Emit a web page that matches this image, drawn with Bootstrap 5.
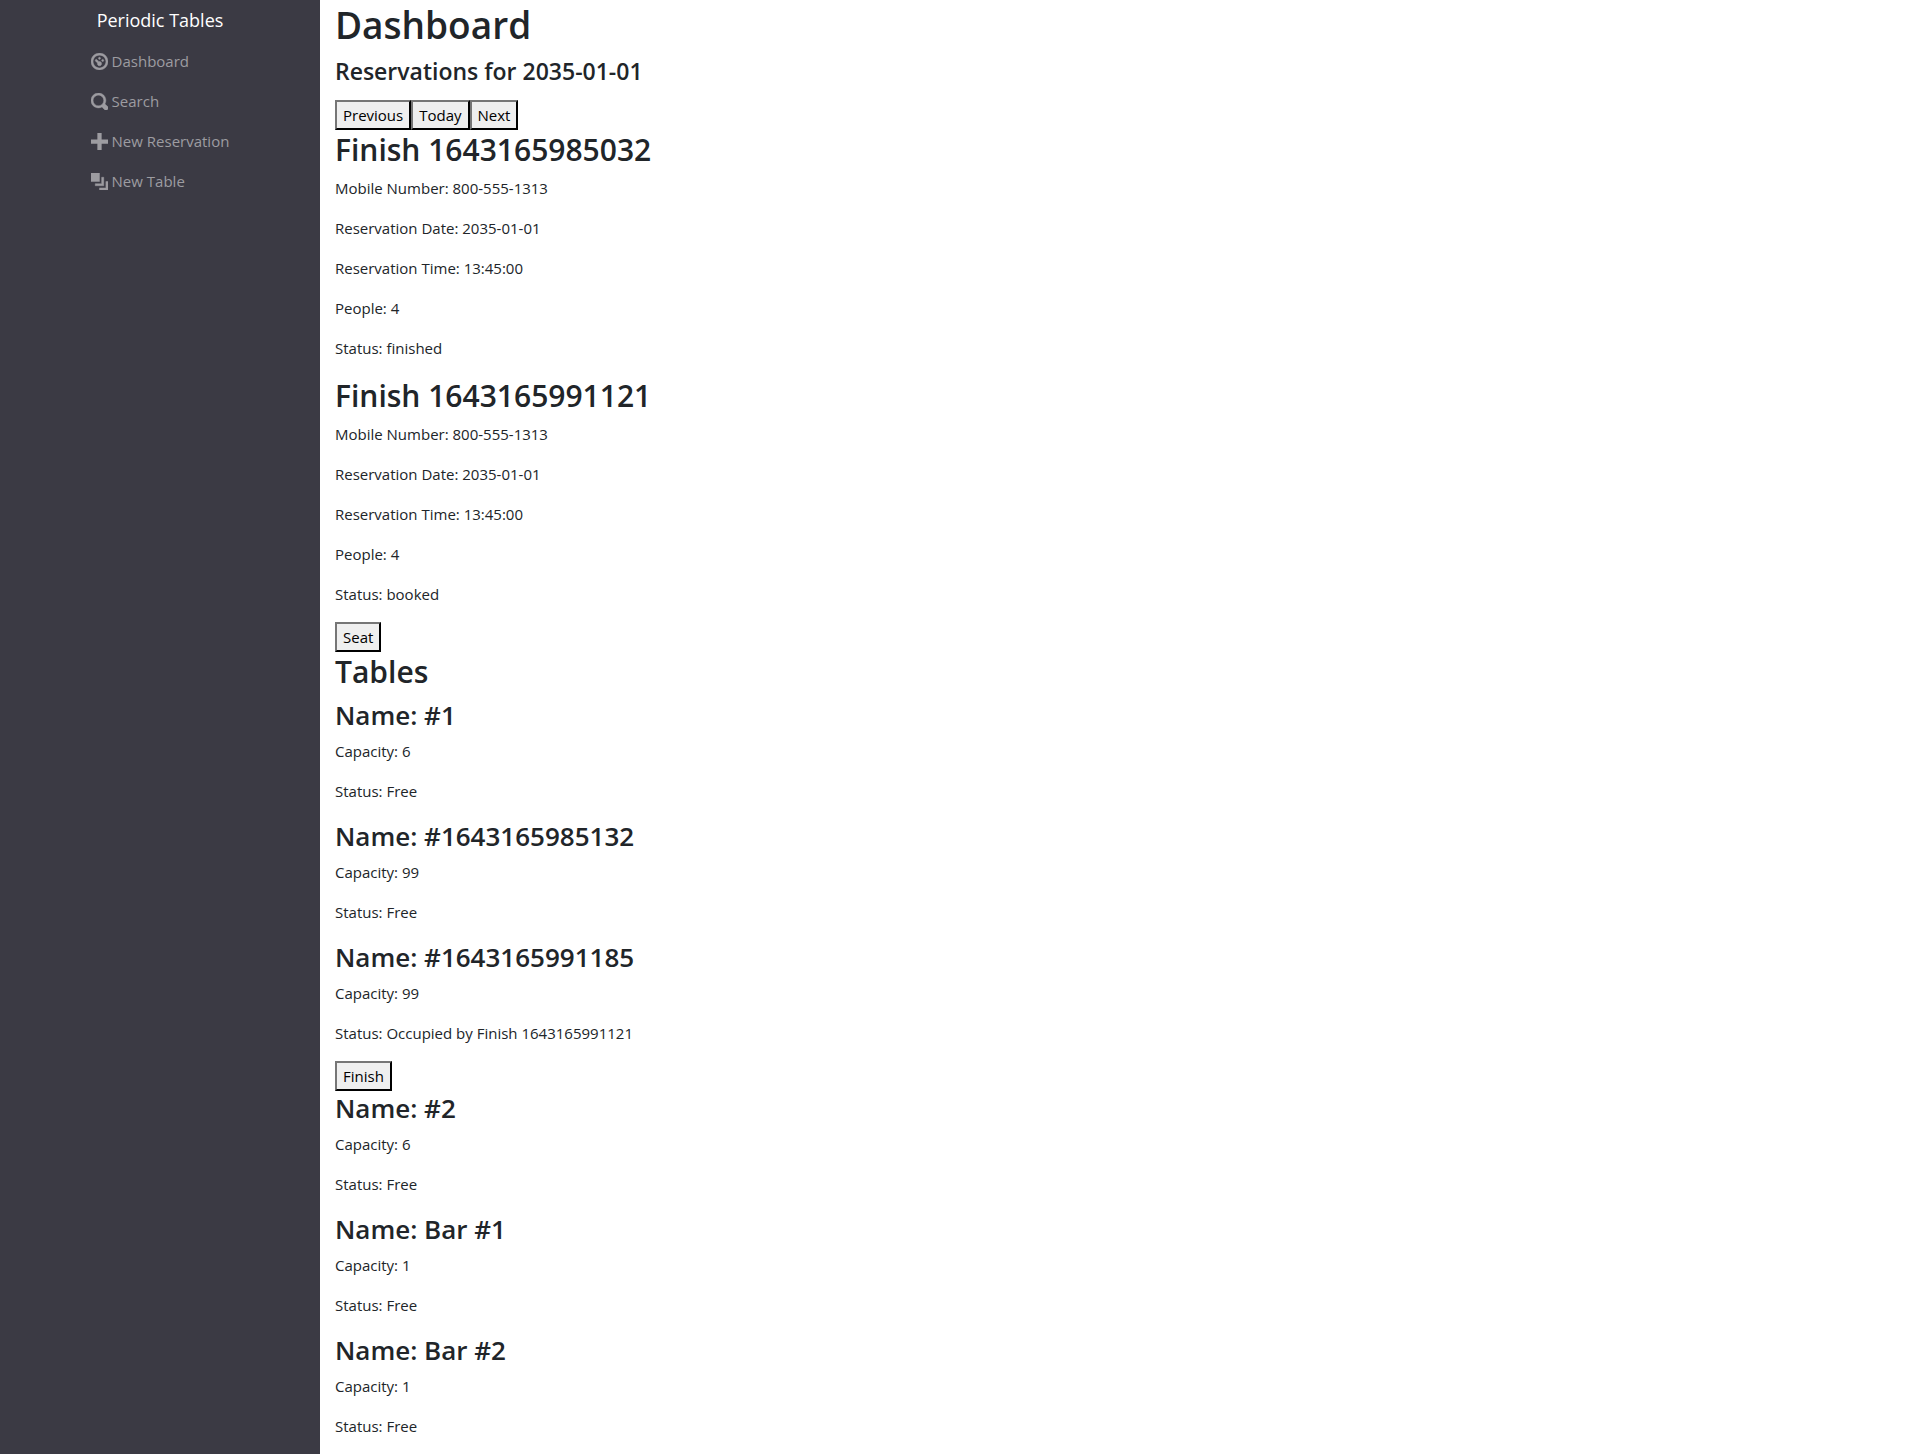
<!DOCTYPE html>
<html lang="en">
<head>
<meta charset="utf-8">
<meta name="viewport" content="width=device-width, initial-scale=1">
<title>Periodic Tables</title>
<link href="https://cdn.jsdelivr.net/npm/bootstrap@5.3.0/dist/css/bootstrap.min.css" rel="stylesheet">
<style>
  body { font-family: "Segoe UI", "Open Sans", "Noto Sans", sans-serif; font-size: 15px; line-height: 24px; color: #212529; }
  h1, h2, h3, h4 { font-weight: 600; }
  h1 { font-size: 37px; line-height: 50px; margin-bottom: 6px; }
  h2 { font-size: 30px; line-height: 40px; margin-bottom: 6px; }
  h3 { font-size: 26px; line-height: 34px; margin-bottom: 7px; }
  h4 { font-size: 23px; line-height: 30px; margin-bottom: 14px; }
  .side-bar { background: #3b3a44; }
  .side-brand { font-size: 18px; line-height: 41px; color: #fff; text-decoration: none; }
  .side-bar .nav-link { color: #9d9ca1; padding: 8px 0; display: flex; align-items: center; gap: 4px; }
  .side-bar .nav-link:hover { color: #fff; }
  .side-bar svg { width: 17px; height: 17px; fill: currentColor; }
  .main-pane { padding: 0 15px; }
  .plain-btn { border: 2px outset #212121; border-color: #767676 #212121 #212121 #767676; background: #efefef; color: #000; padding: 1px 6px; line-height: 24px; }
</style>
<script src="https://cdn.jsdelivr.net/npm/bootstrap@5.3.0/dist/js/bootstrap.bundle.min.js"></script>
</head>
<body>
<div class="container-fluid">
  <div class="row min-vh-100">
    <nav class="col-2 side-bar d-flex flex-column align-items-center" aria-label="Main">
      <a class="side-brand" href="#">Periodic Tables</a>
      <ul class="nav flex-column">
        <li class="nav-item"><a class="nav-link" href="#"><svg viewBox="0 0 8 8" aria-hidden="true"><path d="M4 0c-2.2 0-4 1.8-4 4s1.8 4 4 4 4-1.8 4-4-1.8-4-4-4zm0 1c1.66 0 3 1.34 3 3s-1.34 3-3 3-3-1.34-3-3 1.34-3 3-3zm0 1c-.28 0-.5.22-.5.5s.22.5.5.5.5-.22.5-.5-.22-.5-.5-.5zm-1.66 1a.5.5 0 0 0-.19.84l.91.91c-.02.08-.06.16-.06.25 0 .55.45 1 1 1s1-.45 1-1-.45-1-1-1c-.09 0-.17.04-.25.06l-.91-.91a.5.5 0 0 0-.44-.16.5.5 0 0 0-.06 0zm3.16 0c-.28 0-.5.22-.5.5s.22.5.5.5.5-.22.5-.5-.22-.5-.5-.5z" stroke="currentColor" stroke-width=".2"/></svg>Dashboard</a></li>
        <li class="nav-item"><a class="nav-link" href="#"><svg viewBox="0 0 8 8" aria-hidden="true"><path d="M3.5 0c-1.93 0-3.5 1.57-3.5 3.5s1.57 3.5 3.5 3.5c.59 0 1.17-.14 1.66-.41a1 1 0 0 0 .13.13l1 1a1.02 1.02 0 1 0 1.44-1.44l-1-1a1 1 0 0 0-.16-.13c.27-.49.44-1.06.44-1.66 0-1.93-1.55-3.5-3.48-3.5zm0 1c1.39 0 2.48 1.11 2.48 2.5 0 .66-.24 1.27-.66 1.72l-.03.03a1 1 0 0 0-.13.13c-.44.4-1.04.63-1.66.63-1.39 0-2.5-1.11-2.5-2.5s1.11-2.5 2.5-2.5z" stroke="currentColor" stroke-width=".2"/></svg>Search</a></li>
        <li class="nav-item"><a class="nav-link" href="#"><svg viewBox="0 0 8 8" aria-hidden="true"><path d="M3 0v3h-3v2h3v3h2v-3h3v-2h-3v-3h-2z"/></svg>New Reservation</a></li>
        <li class="nav-item"><a class="nav-link" href="#"><svg viewBox="0 0 8 8" aria-hidden="true"><path d="M0 0v4h4v-4h-4zm5 2v3h-3v1h4v-4h-1zm2 2v3h-3v1h4v-4h-1z" stroke="currentColor" stroke-width=".2"/></svg>New Table</a></li>
      </ul>
    </nav>
    <main class="col-10 main-pane">
      <h1>Dashboard</h1>
      <h4>Reservations for 2035-01-01</h4>
      <div class="d-flex"><button type="button" class="plain-btn">Previous</button><button type="button" class="plain-btn">Today</button><button type="button" class="plain-btn">Next</button></div>
      <section>
        <h2>Finish 1643165985032</h2>
        <p>Mobile Number: 800-555-1313</p>
        <p>Reservation Date: 2035-01-01</p>
        <p>Reservation Time: 13:45:00</p>
        <p>People: 4</p>
        <p>Status: finished</p>
      </section>
      <section>
        <h2>Finish 1643165991121</h2>
        <p>Mobile Number: 800-555-1313</p>
        <p>Reservation Date: 2035-01-01</p>
        <p>Reservation Time: 13:45:00</p>
        <p>People: 4</p>
        <p>Status: booked</p>
        <div class="d-flex"><button type="button" class="plain-btn">Seat</button></div>
      </section>
      <h2>Tables</h2>
      <section>
        <h3>Name: #1</h3>
        <p>Capacity: 6</p>
        <p>Status: Free</p>
      </section>
      <section>
        <h3>Name: #1643165985132</h3>
        <p>Capacity: 99</p>
        <p>Status: Free</p>
      </section>
      <section>
        <h3>Name: #1643165991185</h3>
        <p>Capacity: 99</p>
        <p>Status: Occupied by Finish 1643165991121</p>
        <div class="d-flex"><button type="button" class="plain-btn">Finish</button></div>
      </section>
      <section>
        <h3>Name: #2</h3>
        <p>Capacity: 6</p>
        <p>Status: Free</p>
      </section>
      <section>
        <h3>Name: Bar #1</h3>
        <p>Capacity: 1</p>
        <p>Status: Free</p>
      </section>
      <section>
        <h3>Name: Bar #2</h3>
        <p>Capacity: 1</p>
        <p>Status: Free</p>
      </section>
    </main>
  </div>
</div>
</body>
</html>
